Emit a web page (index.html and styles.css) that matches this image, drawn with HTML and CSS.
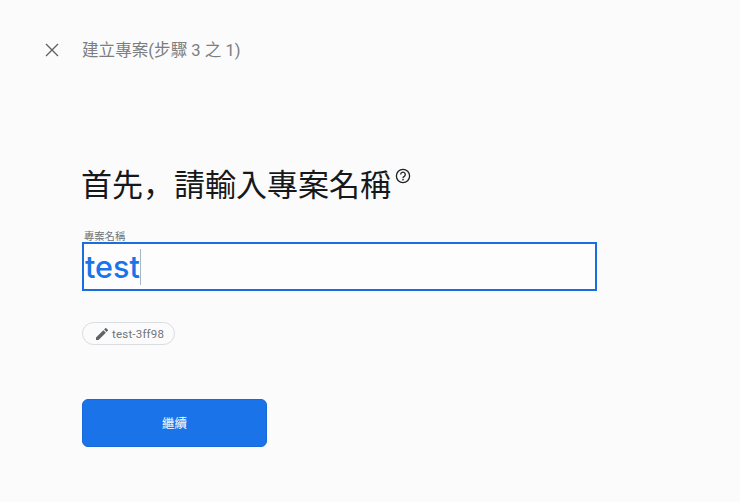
FILE: index.html
```html
<!DOCTYPE html>
<html lang="zh-Hant">
<head>
    <meta charset="UTF-8">
    <meta name="viewport" content="width=device-width, initial-scale=1.0">
    <title>建立專案</title>
    <link rel="stylesheet" href="styles.css">
</head>
<body>
    <div class="header">
        <svg class="close-icon" width="14" height="14" viewBox="0 0 14 14">
            <path d="M1 1L13 13M13 1L1 13" fill="none" stroke="#5f6368" stroke-width="1.4"/>
        </svg>
        <span class="step-title">建立專案(步驟 3 之 1)</span>
    </div>

    <div class="content">
        <div class="heading">
            <h1 lang="ja">首先，請輸入專案名稱</h1>
            <svg class="help-icon" width="16" height="16" viewBox="0 0 16 16">
                <circle cx="8" cy="8" r="6.6" fill="none" stroke="#202124" stroke-width="1.3"/>
                <path d="M5.7 6.5a2.3 2.3 0 1 1 3.6 1.9c-.8.5-1.3.9-1.3 1.8" fill="none" stroke="#202124" stroke-width="1.3"/>
                <rect x="7.3" y="11" width="1.4" height="1.4" fill="#202124"/>
            </svg>
        </div>

        <label class="field-label" for="projectName">專案名稱</label>
        <div class="field">
            <span class="field-value">test</span>
            <span class="caret"></span>
        </div>

        <div class="chip">
            <svg width="16" height="16" viewBox="0 0 24 24">
                <path d="M3 17.25V21h3.75L17.81 9.94l-3.75-3.75L3 17.25zM20.71 7.04a1 1 0 0 0 0-1.41l-2.34-2.34a1 1 0 0 0-1.41 0l-1.83 1.83 3.75 3.75 1.83-1.83z" fill="#5f6368"/>
            </svg>
            <span>test-3ff98</span>
        </div>

        <button class="btn">繼續</button>
    </div>
</body>
</html>
```

FILE: styles.css
```css
* {
    margin: 0;
    padding: 0;
    box-sizing: border-box;
}

body {
    font-family: Roboto, "Noto Sans CJK JP", sans-serif;
    background: #fbfbfc;
    height: 502px;
    overflow: hidden;
}

.header {
    display: flex;
    align-items: center;
    height: 24px;
    margin-top: 38px;
    padding-left: 45px;
}

.close-icon {
    margin-right: 23px;
}

.step-title {
    margin-bottom: 3px;
    font-size: 16.6px;
    color: #7b7e80;
}

.content {
    padding: 0 0 0 82px;
}

.heading {
    display: flex;
    align-items: flex-start;
    margin-top: 101px;
    height: 48px;
}

.heading h1 {
    margin-left: -1px;
    font-size: 31px;
    line-height: 46px;
    font-weight: 400;
    color: #17181a;
}

.help-icon {
    margin: 5px 0 0 4px;
}

.field-label {
    display: block;
    margin: 20px 0 0 2px;
    height: 11px;
    font-size: 10.3px;
    line-height: 11px;
    color: #6f7377;
}

.field {
    display: flex;
    align-items: center;
    width: 515px;
    height: 49px;
    padding-left: 1px;
    background: #fdfdfe;
    border: 2px solid #1a6ddf;
}

.field-value {
    font-family: Inter, sans-serif;
    font-size: 30.5px;
    font-weight: 500;
    color: #1a73e8;
}

.caret {
    width: 1px;
    height: 36px;
    background: #a9b6c6;
}

.chip {
    display: inline-flex;
    align-items: center;
    gap: 2px;
    height: 23px;
    margin-top: 31px;
    padding: 0 10px 0 11px;
    border: 1px solid #dadce0;
    border-radius: 12px;
    font-size: 11.5px;
    letter-spacing: 0.2px;
    color: #70757a;
}

.btn {
    display: block;
    width: 185px;
    height: 48px;
    margin-top: 53px;
    background: #1a73e8;
    color: #fff;
    border: 1px solid #1669d6;
    border-radius: 6px;
    font-family: inherit;
    font-size: 12.5px;
    font-weight: 400;
}
```
